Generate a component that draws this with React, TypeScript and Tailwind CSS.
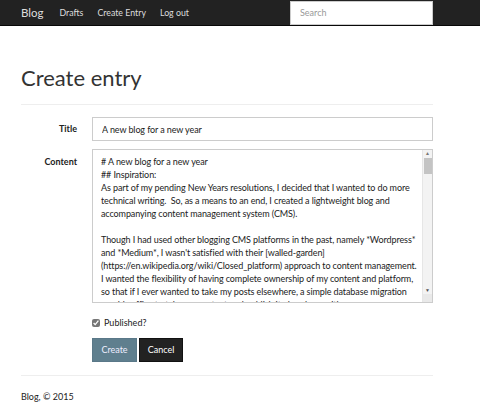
import React from "react";

const content = `# A new blog for a new year
## Inspiration:
As part of my pending New Years resolutions, I decided that I wanted to do more
technical writing.  So, as a means to an end, I created a lightweight blog and
accompanying content management system (CMS).

Though I had used other blogging CMS platforms in the past, namely *Wordpress*
and *Medium*, I wasn't satisfied with their [walled-garden]
(https://en.wikipedia.org/wiki/Closed_platform) approach to content management.
I wanted the flexibility of having complete ownership of my content and platform,
so that if I ever wanted to take my posts elsewhere, a simple database migration
would suffice to take my content and publish it elsewhere with ease.
`;

const F = "font-['Lato','Noto_Sans',sans-serif]";

export default function App() {
  return (
    <div className={`min-h-[417px] bg-white text-[#333] ${F}`}>
      <nav className="h-[26px] bg-[#222] border-b border-[#080808] flex items-center">
        <div className="ml-[21px] w-[412px] flex items-center h-full">
          <span className="text-[11.5px] text-[#ddd] leading-none">Blog</span>
          <div className="flex items-center gap-[14px] ml-[16px] text-[8.8px] text-[#ddd]">
            <span>Drafts</span>
            <span>Create Entry</span>
            <span>Log out</span>
          </div>
          <input
            className={`ml-auto h-[24px] w-[143px] bg-white border border-[#ccc] px-[9px] text-[9px] outline-none placeholder:text-[#999] ${F}`}
            placeholder="Search"
          />
        </div>
      </nav>

      <main className="ml-[21px] w-[412px]">
        <h1 className="text-[22px] font-normal leading-none pt-[41px] pb-[15px] border-b border-[#eee]">
          Create entry
        </h1>

        <div className="mt-[12px] flex items-center">
          <label className="w-[56px] text-right text-[9px] font-bold text-[#222]">Title</label>
          <input
            className={`ml-[15px] flex-1 h-[24px] border border-[#ccc] px-[9px] text-[9px] tracking-[-0.1px] text-[#222] outline-none ${F}`}
            defaultValue="A new blog for a new year"
          />
        </div>

        <div className="mt-[8px] flex items-start">
          <label className="w-[56px] text-right text-[9px] font-bold pt-[6px] text-[#222]">Content</label>
          <div className="ml-[15px] flex-1 h-[154px] border border-[#ccc] flex">
            <textarea
              className={`flex-1 h-full pl-[8px] pr-[2px] pt-[5px] text-[9px] tracking-[-0.1px] leading-[13px] text-[#222] outline-none resize-none overflow-hidden whitespace-pre ${F}`}
              wrap="off"
              spellCheck={false}
              defaultValue={content}
            />
            <div className="w-[10px] h-full bg-[#f3f3f3] border-l border-[#e6e6e6] flex flex-col items-center">
              <div className="h-[7px] w-full flex items-center justify-center text-[#777] text-[5px] leading-none">▲</div>
              <div className="w-[8px] h-[16px] bg-[#c4c4c4] mt-[1px]" />
              <div className="flex-1" />
              <div className="h-[7px] w-full flex items-center justify-center text-[#555] text-[5px] leading-none">▼</div>
              <div className="h-[8px] w-full bg-[#e9e9e9]" />
            </div>
          </div>
        </div>

        <div className="ml-[71px] mt-[13px] flex items-center gap-[4px] h-[14px]">
          <input type="checkbox" defaultChecked className="w-[8px] h-[8px] m-0 accent-[#777]" />
          <span className="text-[9px] text-[#222]">Published?</span>
        </div>

        <div className="ml-[71px] mt-[8px] flex gap-[2px]">
          <button className={`w-[45px] h-[24px] bg-[#5f7f8e] border border-[#5a7888] text-[#eef] text-[9px] ${F}`}>
            Create
          </button>
          <button className={`w-[44px] h-[24px] bg-[#222] border border-[#111] text-white text-[9px] ${F}`}>
            Cancel
          </button>
        </div>

        <div className="mt-[13px] border-t border-[#eee]" />
        <footer className="pt-[14px] text-[9px] text-[#222]">Blog, © 2015</footer>
      </main>
    </div>
  );
}
